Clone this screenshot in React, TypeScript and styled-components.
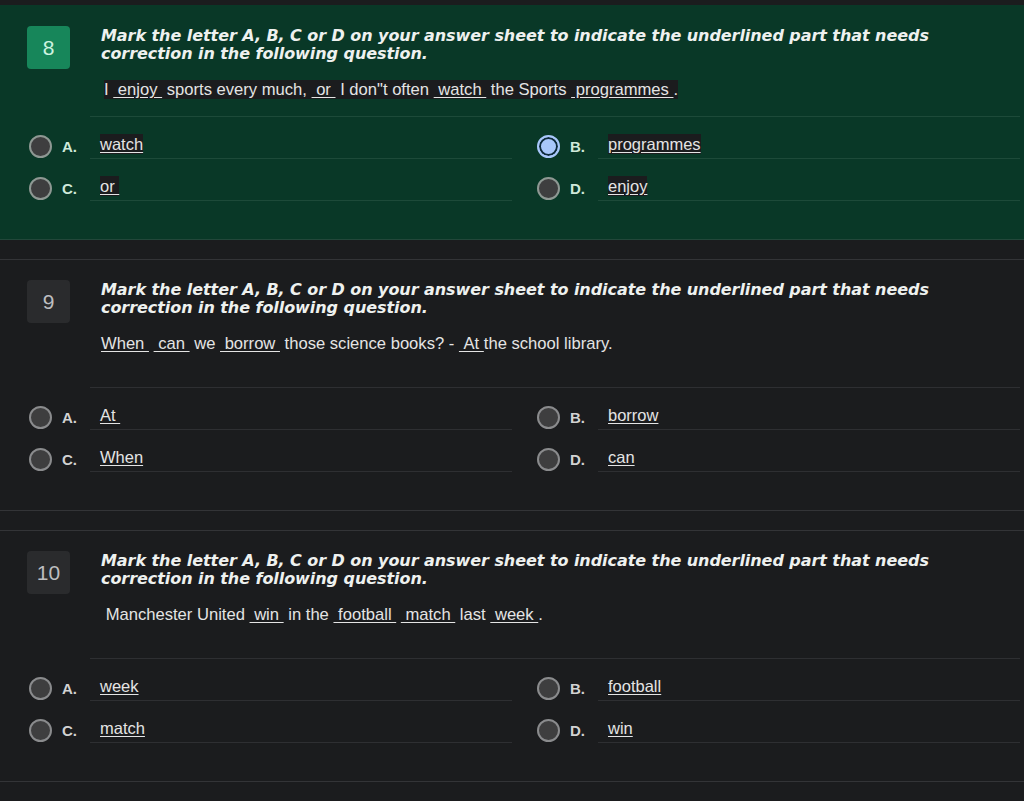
import React from "react";
import styled, { createGlobalStyle, css } from "styled-components";

const Global = createGlobalStyle`
  html, body { margin: 0; padding: 0; background: #1b1c1e; }
  body { font-family: "Liberation Sans", Arial, sans-serif; color: #e6e6e6; }
`;

const Page = styled.div`
  width: 1024px;
  min-height: 801px;
  padding-top: 5px;
  box-sizing: border-box;
  background: #1b1c1e;
  overflow: hidden;
`;

const Card = styled.section<{ $active?: boolean }>`
  background: ${(p) => (p.$active ? "#093827" : "#1b1c1e")};
  border-top: 1px solid ${(p) => (p.$active ? "#093827" : "#333437")};
  border-bottom: 1px solid ${(p) => (p.$active ? "#22473a" : "#333437")};
  padding: 20px 0 38px;
  margin-bottom: 19px;
`;

const Head = styled.div`
  display: flex;
  align-items: flex-start;
  padding-left: 27px;
`;

const Badge = styled.div<{ $active?: boolean }>`
  width: 43px;
  height: 43px;
  flex: none;
  border-radius: 4px;
  display: flex;
  align-items: center;
  justify-content: center;
  font-size: 21px;
  background: ${(p) => (p.$active ? "#17865a" : "#2a2b2d")};
  color: ${(p) => (p.$active ? "#cdf3e0" : "#bdbec0")};
`;

const Body = styled.div`
  margin-left: 31px;
  padding-top: 1px;
`;

const Title = styled.div`
  font-family: "DejaVu Sans", sans-serif;
  font-weight: 700;
  font-style: italic;
  font-size: 16px;
  line-height: 18px;
  letter-spacing: -0.06px;
  color: #eef1ef;
  width: 900px;
`;

const Sentence = styled.div<{ $tall?: boolean }>`
  margin-top: 17px;
  font-size: 16.6px;
  line-height: 20px;
  color: #e4e4e4;
  margin-bottom: ${(p) => (p.$tall ? "33px" : "16px")};
`;

const Mark = styled.span`
  background: #1b1c1e;
  margin-left: 3px;
`;

const U = styled.u`
  text-decoration: underline;
  text-underline-offset: 2px;
`;

const Separator = styled.div<{ $active?: boolean }>`
  height: 1px;
  margin: 0 4px 0 90px;
  background: ${(p) => (p.$active ? "#1d4a39" : "#2e2f32")};
`;

const Options = styled.div`
  display: grid;
  grid-template-columns: 1fr 1fr;
  column-gap: 25px;
  padding: 0 4px 0 29px;
`;

const Option = styled.div`
  display: flex;
  align-items: flex-end;
`;

const Radio = styled.span<{ $checked?: boolean; $active?: boolean }>`
  width: 23px;
  height: 23px;
  box-sizing: border-box;
  flex: none;
  border-radius: 50%;
  margin-bottom: 1px;
  margin-right: 10px;
  ${(p) =>
    p.$checked
      ? css`
          background: #a8c7fa;
          border: 2px solid #a8c7fa;
          box-shadow: inset 0 0 0 2px #0d2a3a;
        `
      : css`
          background: #3e3e3f;
          border: 2px solid ${p.$active ? "#8e9893" : "#8a8b8d"};
        `}
`;

const Letter = styled.span<{ $active?: boolean }>`
  width: 28px;
  flex: none;
  font-weight: 700;
  font-size: 15px;
  line-height: 20px;
  margin-bottom: 2px;
  color: ${(p) => (p.$active ? "#cfe9da" : "#d2d2d2")};
`;

const Answer = styled.div<{ $active?: boolean }>`
  flex: 1;
  height: 42px;
  box-sizing: border-box;
  display: flex;
  align-items: flex-end;
  padding: 0 0 4px 10px;
  border-bottom: 1px solid ${(p) => (p.$active ? "#1d4a39" : "#2e2f32")};
  font-size: 16.5px;
  line-height: 20px;
  color: #e4e4e4;
`;

const AnswerText = styled.u<{ $active?: boolean }>`
  text-decoration: underline;
  text-underline-offset: 2px;
  ${(p) => p.$active && css`background: #1b1c1e;`}
`;

type Opt = { letter: string; text: string; checked?: boolean };

type Q = {
  n: number;
  active?: boolean;
  tall?: boolean;
  sentence: React.ReactNode;
  options: Opt[];
};

const NB = "\u00a0";
const blank = (w: string) => <U>{NB + w + NB}</U>;

const TITLE =
  "Mark the letter A, B, C or D on your answer sheet to indicate the underlined part that needs correction in the following question.";

const questions: Q[] = [
  {
    n: 8,
    active: true,
    sentence: (
      <Mark>
        I {blank("enjoy")} sports every much, {blank("or")} I don"t often {blank("watch")} the Sports {blank("programmes")}.
      </Mark>
    ),
    options: [
      { letter: "A.", text: "watch" },
      { letter: "B.", text: "programmes", checked: true },
      { letter: "C.", text: "or" + NB },
      { letter: "D.", text: "enjoy" },
    ],
  },
  {
    n: 9,
    tall: true,
    sentence: (
      <>
        <U>{"When" + NB}</U> {blank("can")} we {blank("borrow")} those science books? - <U>{NB + "At" + NB}</U>the school library.
      </>
    ),
    options: [
      { letter: "A.", text: "At" + NB },
      { letter: "B.", text: "borrow" },
      { letter: "C.", text: "When" },
      { letter: "D.", text: "can" },
    ],
  },
  {
    n: 10,
    tall: true,
    sentence: (
      <>
        {NB}Manchester United {blank("win")} in the {blank("football")} {blank("match")} last {blank("week")}.
      </>
    ),
    options: [
      { letter: "A.", text: "week" },
      { letter: "B.", text: "football" },
      { letter: "C.", text: "match" },
      { letter: "D.", text: "win" },
    ],
  },
];

export default function App() {
  return (
    <Page>
      <Global />
      {questions.map((q) => (
        <Card key={q.n} $active={q.active}>
          <Head>
            <Badge $active={q.active}>{q.n}</Badge>
            <Body>
              <Title>{TITLE}</Title>
              <Sentence $tall={q.tall}>{q.sentence}</Sentence>
            </Body>
          </Head>
          <Separator $active={q.active} />
          <Options>
            {q.options.map((o) => (
              <Option key={o.letter}>
                <Radio $checked={o.checked} $active={q.active} />
                <Letter $active={q.active}>{o.letter}</Letter>
                <Answer $active={q.active}>
                  <AnswerText $active={q.active}>{o.text}</AnswerText>
                </Answer>
              </Option>
            ))}
          </Options>
        </Card>
      ))}
    </Page>
  );
}
